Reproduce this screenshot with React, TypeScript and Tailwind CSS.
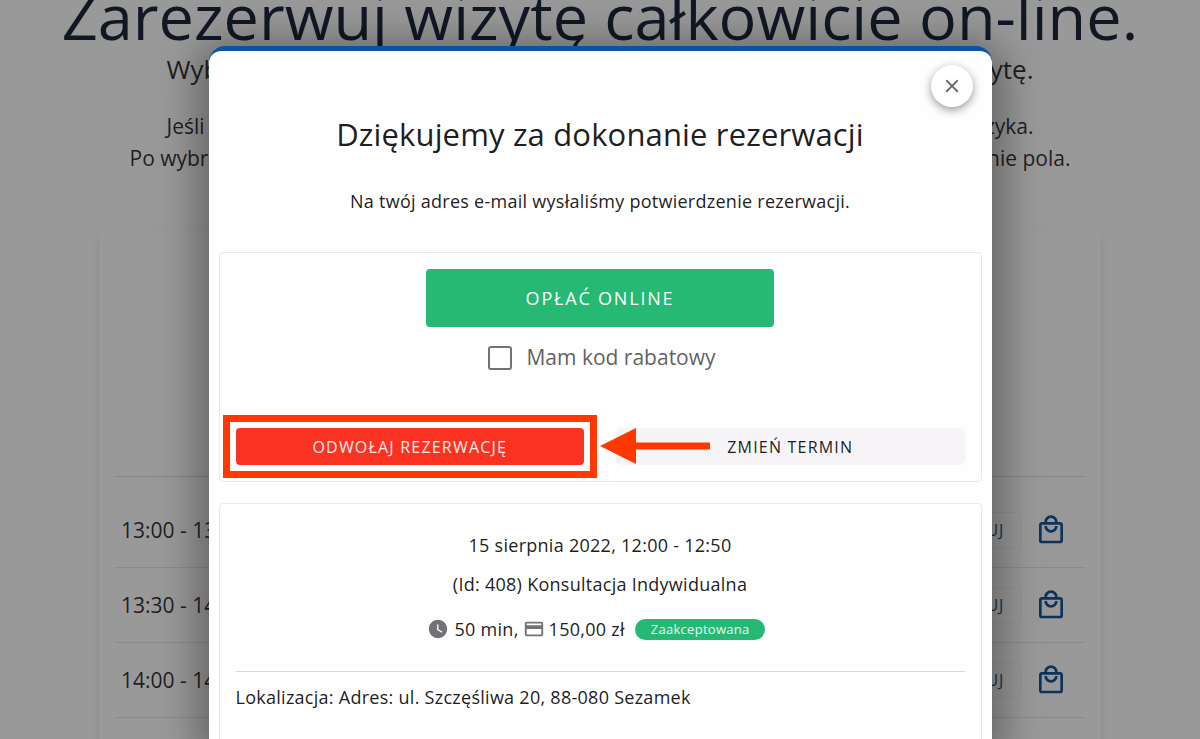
import { useState } from 'react';
import { MdClose, MdCreditCard, MdOutlineLocalMall, MdWatchLater } from 'react-icons/md';

// ---------------------------------------------------------------------------
// Data
// ---------------------------------------------------------------------------

interface Slot {
  from: string;
  to: string;
}

const SLOTS: Slot[] = [
  { from: '13:00', to: '13:50' },
  { from: '13:30', to: '14:20' },
  { from: '14:00', to: '14:50' },
];

// ---------------------------------------------------------------------------
// BookingPage — strona pod oknem dialogowym
// ---------------------------------------------------------------------------

function SlotRow({ from, to }: Slot) {
  return (
    <li className="flex h-[75px] items-center justify-between border-b border-black/10 pl-1.5 pr-[18px]">
      <span className="pt-0.5 text-[21px]">
        {from} - {to}
      </span>
      <div className="flex items-center gap-3.5">
        <button
          type="button"
          className="h-9 rounded border border-black/5 px-4 text-base tracking-wider text-[#0e3f72]"
        >
          REZERWUJ
        </button>
        <button type="button" aria-label="Dodaj do koszyka" className="text-[#004488]">
          <MdOutlineLocalMall className="size-8" />
        </button>
      </div>
    </li>
  );
}

function BookingPage() {
  return (
    <main className="-mt-5 text-center text-black/90">
      <h1 className="-mx-4 text-[63px] leading-[72px] text-[#051228]">
        Zarezerwuj wizytę całkowicie on-line.
      </h1>
      <div className="mx-auto mt-1 flex max-w-[867px] justify-between text-[26px] leading-[26px]">
        <span>Wybierz</span>
        <span>wizytę.</span>
      </div>
      <div className="mx-auto mt-7 flex max-w-[867px] justify-between text-[21px] leading-8">
        <span>Jeśli</span>
        <span>języka.</span>
      </div>
      <div className="mx-auto flex max-w-[941px] justify-between text-[21px] leading-8">
        <span>Po wybraniu</span>
        <span>odpowiednie pola.</span>
      </div>
      <section className="mx-auto mt-14 max-w-[1002px] rounded px-4 pb-10 pt-[246px] text-left shadow-[0_3px_6px_rgba(0,0,0,0.12)]">
        <ul className="border-t border-black/15 pt-4">
          {SLOTS.map((slot) => (
            <SlotRow key={slot.from} {...slot} />
          ))}
        </ul>
      </section>
    </main>
  );
}

// ---------------------------------------------------------------------------
// ConfirmationDialog
// ---------------------------------------------------------------------------

function Pointer() {
  return (
    <svg viewBox="0 0 110 36" aria-hidden="true" className="absolute -left-4 top-0 h-9 w-[110px]">
      <path d="M0 18 36 0V14.500H110V21.500H36V36Z" fill="#ff3700" />
    </svg>
  );
}

function ConfirmationDialog() {
  const [hasCode, setHasCode] = useState(false);

  return (
    <div
      role="dialog"
      aria-modal="true"
      aria-labelledby="dialog-title"
      className="relative min-h-full w-full max-w-[783px] rounded-t-2xl bg-[#0f52a0] pt-[5px] shadow-[0_8px_40px_12px_rgba(0,0,0,0.35)]"
    >
      <div className="min-h-screen rounded-t-xl bg-[#fefefe] px-2.5 pt-[61px] text-center text-black/90">
        <button
          type="button"
          aria-label="Zamknij"
          className="absolute right-[19px] top-[19px] flex size-[42px] items-center justify-center rounded-full bg-white text-black/60 shadow-[0_3px_10px_rgba(0,0,0,0.4)]"
        >
          <MdClose className="size-[22px]" />
        </button>

        <h2 id="dialog-title" className="text-[31px] leading-[44px] tracking-[0.005em]">
          Dziękujemy za dokonanie rezerwacji
        </h2>
        <p className="mt-[31px] text-lg leading-7 tracking-[0.015em]">
          Na twój adres e-mail wysłaliśmy potwierdzenie rezerwacji.
        </p>

        <section className="mt-[37px] rounded border border-[#e9e7ec] p-4">
          <button
            type="button"
            className="mx-auto block h-[58px] w-full max-w-[348px] rounded bg-[#25b974] text-lg tracking-widest text-white"
          >
            OPŁAĆ ONLINE
          </button>
          <label className="ml-1 mt-[15px] flex h-8 items-center justify-center gap-3.5 text-[21px] text-black/65">
            <input
              type="checkbox"
              checked={hasCode}
              onChange={(e) => setHasCode(e.target.checked)}
              className="size-6 appearance-none rounded-[3px] border-2 border-[#747276] checked:bg-[#747276]"
            />
            Mam kod rabatowy
          </label>
          <div className="mt-[54px] grid grid-cols-2 gap-8">
            <div className="relative">
              <button
                type="button"
                className="h-[37px] w-full rounded bg-[#f93222] text-base tracking-[0.075em] text-white/90"
              >
                ODWOŁAJ REZERWACJĘ
              </button>
              <div className="pointer-events-none absolute -inset-[13px] border-[7px] border-[#ff3700]" />
            </div>
            <div className="relative">
              <button
                type="button"
                className="h-[37px] w-full rounded-md bg-[#f6f4f7] text-base tracking-[0.075em]"
              >
                ZMIEŃ TERMIN
              </button>
              <Pointer />
            </div>
          </div>
        </section>

        <section className="mt-[21px] rounded border border-[#e9e7ec] px-4 pb-20 pt-[27px] text-lg tracking-[0.015em]">
          <p className="leading-7">15 sierpnia 2022, 12:00 - 12:50</p>
          <p className="mt-[11px] leading-7">(Id: 408) Konsultacja Indywidualna</p>
          <div className="mr-2 mt-[17px] flex items-center justify-center leading-7">
            <MdWatchLater className="size-[22px] text-[#747276]" />
            <span className="ml-1.5">50 min,</span>
            <MdCreditCard className="ml-1 size-[22px] text-[#747276]" />
            <span className="ml-1">150,00 zł</span>
            <span className="ml-2.5 rounded-full bg-[#25b974] px-4 text-[13px] leading-[21px] text-white/90">
              Zaakceptowana
            </span>
          </div>
          <p className="mt-7 border-t border-black/15 pt-[11px] text-left leading-7">
            Lokalizacja: Adres: ul. Szczęśliwa 20, 88-080 Sezamek
          </p>
        </section>
      </div>
    </div>
  );
}

export default function App() {
  return (
    <div className="flow-root h-screen overflow-hidden bg-white font-['Open_Sans','Noto_Sans',sans-serif]">
      <BookingPage />
      <div className="fixed inset-0 flex justify-center overflow-hidden bg-[#212121]/46 pt-[46px]">
        <ConfirmationDialog />
      </div>
    </div>
  );
}
